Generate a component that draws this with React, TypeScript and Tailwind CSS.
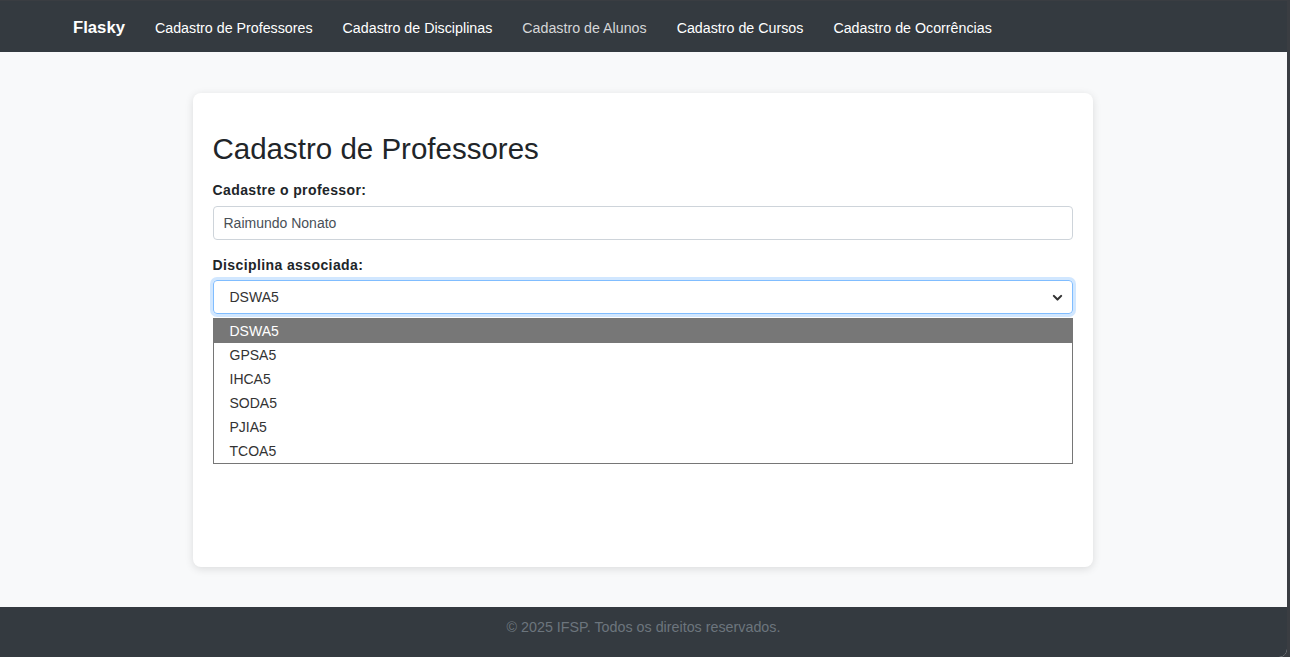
import React from "react";

const options = ["DSWA5", "GPSA5", "IHCA5", "SODA5", "PJIA5", "TCOA5"];

export default function App() {
  return (
    <div
      className="w-[1290px] h-[657px] overflow-hidden bg-[#3a3d42] flex flex-col"
      style={{ fontFamily: '"Liberation Sans", Arial, sans-serif' }}
    >
      <div className="flex-1 flex flex-col mt-px mr-[3px] rounded-br-[8px] overflow-hidden bg-[#f8f9fa]">
        <nav className="h-[51px] shrink-0 bg-[#343a40] flex items-center pl-[73px] pt-[3px]">
          <span className="text-white text-[16.7px] font-bold mr-[30px] leading-none">Flasky</span>
          <div className="flex items-center gap-[30px] text-[14.25px] leading-none">
            <span className="text-white">Cadastro de Professores</span>
            <span className="text-white">Cadastro de Disciplinas</span>
            <span className="text-[#d5d6d8]">Cadastro de Alunos</span>
            <span className="text-white">Cadastro de Cursos</span>
            <span className="text-white">Cadastro de Ocorrências</span>
          </div>
        </nav>
        <main className="flex-1 flex justify-center pt-[41px] pr-[2px]">
          <div className="relative w-[900px] h-[474px] bg-white rounded-[8px] shadow-[0_2px_8px_rgba(0,0,0,0.12)] px-[20px] pt-[38px]">
            <h1 className="text-[29.5px] leading-[36px] text-[#212529] mb-[13px]">Cadastro de Professores</h1>
            <label className="block text-[14px] font-bold text-[#212529] tracking-[0.4px] leading-[20px] mb-[6px]">
              Cadastre o professor:
            </label>
            <div className="h-[34px] border border-[#ced4da] rounded-[4px] flex items-center px-[10px] text-[14px] text-[#495057]">
              Raimundo Nonato
            </div>
            <label className="block text-[14px] font-bold text-[#212529] tracking-[0.4px] leading-[20px] mt-[15px] mb-[5px]">
              Disciplina associada:
            </label>
            <div className="h-[34px] border border-[#80bdff] rounded-[4px] shadow-[0_0_0_3px_rgba(0,123,255,0.18)] flex items-center justify-between pl-[16px] pr-[8px] text-[14px] text-[#333]">
              <span>DSWA5</span>
              <svg width="13" height="13" viewBox="0 0 16 16" fill="none" stroke="#333" strokeWidth="2.6" strokeLinecap="round" strokeLinejoin="round">
                <path d="M3.5 6l4.5 4.5L12.5 6" />
              </svg>
            </div>
            <div className="absolute left-[20px] top-[225px] w-[860px] border border-[#767676] bg-white text-[14px]">
              {options.map((o, i) => (
                <div
                  key={o}
                  className={
                    "h-[24px] flex items-center pl-[16px] " +
                    (i === 0 ? "bg-[#777777] text-white" : "text-[#333]")
                  }
                >
                  {o}
                </div>
              ))}
            </div>
          </div>
        </main>
        <footer className="h-[50px] shrink-0 bg-[#343a40] flex justify-center pt-[12px] text-[14.3px] leading-[16px] text-[#6c757d]">
          © 2025 IFSP. Todos os direitos reservados.
        </footer>
      </div>
    </div>
  );
}
